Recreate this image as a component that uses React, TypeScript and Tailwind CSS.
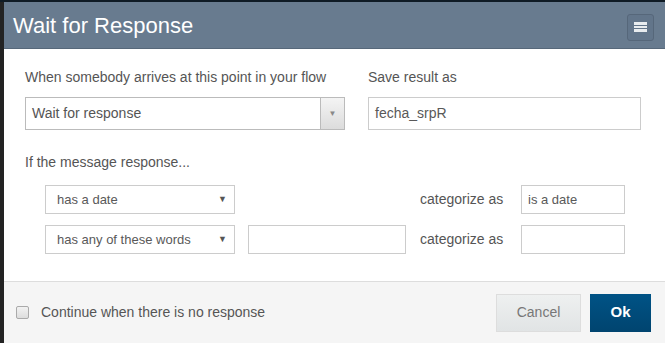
import React from "react";

const font = { fontFamily: '"Liberation Sans", Arial, sans-serif' };

function SmallSelect({ value }: { value: string }) {
  return (
    <div className="flex h-[29px] w-[190px] items-center justify-between border border-[#ccc] bg-white pl-[11px] pr-[7px] text-[13px] text-[#595959]">
      <span>{value}</span>
      <span className="text-[9px] text-[#555]">▼</span>
    </div>
  );
}

function Field({ w, value }: { w: string; value?: string }) {
  return (
    <div className={`flex h-[29px] items-center border border-[#ccc] bg-white pl-[6px] text-[13px] text-[#595959] ${w}`}>
      {value}
    </div>
  );
}

function Rule({ op, words, cat }: { op: string; words: boolean; cat?: string }) {
  return (
    <div className="flex items-center">
      <SmallSelect value={op} />
      {words ? (
        <div className="ml-[13px] h-[29px] w-[158px] border border-[#ccc] bg-white" />
      ) : (
        <div className="ml-[13px] w-[158px]" />
      )}
      <span className="ml-[14px] w-[101px] text-[14px] text-[#555]">categorize as</span>
      <Field w="w-[104px]" value={cat} />
    </div>
  );
}

export default function App() {
  return (
    <div className="h-[343px] w-[665px] overflow-hidden bg-[#232323]" style={font}>
      <div className="h-[2px] bg-[#0f1b25]" />
      <div className="ml-[4px] flex h-[341px] flex-col bg-white">
        <div className="flex h-[47px] items-center justify-between border-b border-[#57687a] bg-[#687b8f] pl-[9px] pr-[11px]">
          <h1 className="text-[22px] text-white">Wait for Response</h1>
          <button className="mt-[4px] flex h-[27px] w-[27px] flex-col items-center justify-center gap-[1px] rounded-[3px] border border-[#56677a] bg-[#62758a]">
            <span className="h-[3px] w-[13px] bg-[#e8ecef]" />
            <span className="h-[2px] w-[13px] bg-[#e8ecef]" />
            <span className="h-[3px] w-[13px] bg-[#e8ecef]" />
          </button>
        </div>

        <div className="flex-1 pl-[21px] pt-[18px]">
          <div className="flex gap-[23px]">
            <div className="w-[320px]">
              <div className="mb-[10px] text-[14px] leading-[20px] text-[#555]">
                When somebody arrives at this point in your flow
              </div>
              <div className="flex h-[33px] items-stretch border border-[#bbb] bg-white">
                <span className="flex flex-1 items-center pl-[6px] text-[14px] text-[#555]">Wait for response</span>
                <span className="flex w-[24px] items-center justify-center border-l border-[#bbb] bg-gradient-to-b from-[#f4f4f4] to-[#dcdcdc] text-[8px] text-[#888]">
                  ▼
                </span>
              </div>
            </div>
            <div className="w-[273px]">
              <div className="mb-[10px] text-[14px] leading-[20px] text-[#555]">Save result as</div>
              <div className="flex h-[33px] items-center border border-[#ccc] bg-white pl-[6px] text-[14px] text-[#595959]">
                fecha_srpR
              </div>
            </div>
          </div>

          <div className="mt-[22px] text-[14px] leading-[20px] text-[#555]">If the message response...</div>

          <div className="mt-[13px] flex flex-col gap-[11px] pl-[20px]">
            <Rule op="has a date" words={false} cat="is a date" />
            <Rule op="has any of these words" words={true} />
          </div>
        </div>

        <div className="flex h-[62px] items-center justify-between border-t border-[#ddd] bg-[#f5f5f5] pl-[12px] pr-[14px]">
          <label className="flex items-center gap-[12px] text-[14px] text-[#555]">
            <span className="h-[13px] w-[13px] rounded-[2px] border border-[#aaa] bg-gradient-to-b from-[#f2f2f2] to-[#ddd]" />
            Continue when there is no response
          </label>
          <div className="flex gap-[9px]">
            <button className="h-[38px] w-[85px] border border-[#ddd] bg-gradient-to-b from-[#eef0f0] to-[#e1e4e5] text-[14px] text-[#777]">
              Cancel
            </button>
            <button className="h-[38px] w-[61px] bg-gradient-to-b from-[#005386] to-[#00446f] text-[15px] font-bold text-white">
              Ok
            </button>
          </div>
        </div>
      </div>
    </div>
  );
}
